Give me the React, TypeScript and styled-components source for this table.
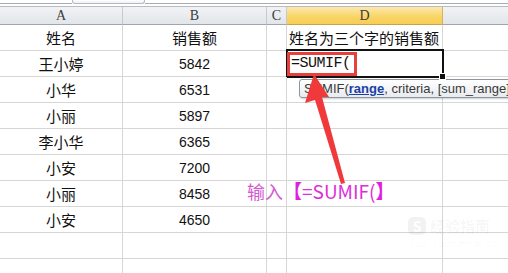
import styled, { createGlobalStyle } from "styled-components";

const GlobalStyle = createGlobalStyle`
  html, body {
    margin: 0;
    padding: 0;
    background: #ffffff;
    overflow: hidden;
  }
`;

const Page = styled.div`
  position: relative;
  width: 508px;
  height: 273px;
  overflow: hidden;
  background: #ffffff;
`;

const TopStrip = styled.div`
  display: flex;
  align-items: flex-start;
  height: 7px;
  border-bottom: 1px solid #b8bcc2;
  box-sizing: border-box;
`;

const StripLine = styled.div<{ $w?: number }>`
  flex: ${(p) => (p.$w ? `0 0 ${p.$w}px` : "1")};
  height: 3px;
  border-bottom: 1px solid #a9adb3;
`;

const StripTab = styled.div`
  flex: 0 0 73px;
  height: 4px;
  border: 1px solid #b5b9bf;
  border-top: none;
  border-radius: 0 0 3px 3px;
  background: linear-gradient(#ffffff, #eef0f3);
  box-sizing: border-box;
`;

const Grid = styled.div`
  display: grid;
  grid-template-columns: 123px 144px 20px 156px 140px;
  grid-template-rows: 18px;
  grid-auto-rows: 26px;
`;

const HeadCell = styled.div<{ $active?: boolean }>`
  box-sizing: border-box;
  display: flex;
  align-items: center;
  justify-content: center;
  font-family: "Liberation Serif", "Noto Sans CJK SC", serif;
  font-size: 14px;
  color: #3c3c3c;
  border-right: 1px solid ${(p) => (p.$active ? "#d9b15a" : "#c6cad0")};
  border-bottom: 1px solid ${(p) => (p.$active ? "#c9a24c" : "#9fa5ad")};
  background: ${(p) =>
    p.$active
      ? "linear-gradient(#fde9ad, #f9d463 60%, #f7cd55)"
      : "linear-gradient(#f1f3f5, #e2e5e9)"};
`;

const Cell = styled.div<{ $align?: "left" | "center"; $num?: boolean }>`
  position: relative;
  box-sizing: border-box;
  display: flex;
  align-items: center;
  justify-content: ${(p) => (p.$align === "left" ? "flex-start" : "center")};
  padding-left: ${(p) => (p.$align === "left" ? "2px" : "0")};
  border-right: 1px solid #d6d6d6;
  border-bottom: 1px solid #d6d6d6;
  font-family: ${(p) =>
    p.$num
      ? `"Liberation Sans", Arial, sans-serif`
      : `"Noto Sans CJK SC", sans-serif`};
  font-size: ${(p) => (p.$num ? "14px" : "15px")};
  color: #111111;
  white-space: nowrap;
`;

const ActiveCell = styled(Cell)`
  &::after {
    content: "";
    position: absolute;
    left: -1px;
    top: -2px;
    right: -2px;
    bottom: -2px;
    border: 2px solid #111111;
    pointer-events: none;
  }
  &::before {
    content: "";
    position: absolute;
    right: -4px;
    bottom: -4px;
    width: 5px;
    height: 5px;
    background: #111111;
    border: 1px solid #ffffff;
    z-index: 2;
  }
`;

const FormulaBox = styled.span`
  display: inline-flex;
  align-items: center;
  height: 24px;
  box-sizing: border-box;
  margin-left: -2px;
  padding: 0 3px 0 1px;
  border: 3px solid #e8403f;
  font-family: "Liberation Mono", "DejaVu Sans Mono", monospace;
  font-size: 15px;
  letter-spacing: -0.5px;
  color: #111111;
  position: relative;
  z-index: 1;
`;

const Tooltip = styled.div`
  position: absolute;
  left: 299px;
  top: 79px;
  height: 19px;
  padding: 0 6px 0 4px;
  box-sizing: border-box;
  display: flex;
  align-items: center;
  border: 1px solid #8f959c;
  border-radius: 3px;
  background: linear-gradient(#ffffff, #e8ebef);
  box-shadow: 1px 1px 2px rgba(0, 0, 0, 0.2);
  font-family: "Liberation Sans", Arial, sans-serif;
  font-size: 13px;
  color: #3a3a3a;
  white-space: nowrap;
`;

const ArgActive = styled.span`
  font-weight: bold;
  color: #1a3fa6;
  text-decoration: underline;
`;

const Arrow = styled.svg`
  position: absolute;
  left: 0;
  top: 0;
  pointer-events: none;
`;

const Note = styled.div`
  position: absolute;
  left: 247px;
  top: 179px;
  display: flex;
  align-items: center;
  font-family: "Noto Sans CJK SC", sans-serif;
  font-size: 19px;
  line-height: 24px;
  color: #dd2fd8;
  white-space: nowrap;
`;

const NoteLead = styled.span`
  color: #d35bd0;
  font-size: 18px;
`;

const Bracket = styled.span`
  font-weight: bold;
  color: #e01fdc;
`;

const Watermark = styled.div`
  position: absolute;
  left: 408px;
  top: 215px;
  display: flex;
  flex-direction: column;
  gap: 3px;
  color: rgba(0, 0, 0, 0.045);
  font-family: "Noto Sans CJK SC", sans-serif;
  white-space: nowrap;
`;

const MarkTop = styled.div`
  display: flex;
  align-items: center;
  gap: 4px;
  font-size: 15px;
  font-weight: bold;
`;

const MarkLogo = styled.span`
  display: inline-flex;
  align-items: center;
  justify-content: center;
  width: 18px;
  height: 18px;
  border-radius: 5px;
  background: rgba(0, 0, 0, 0.05);
  color: #ffffff;
  font-size: 14px;
`;

const MarkSub = styled.div`
  font-family: "Liberation Sans", Arial, sans-serif;
  font-size: 9px;
`;

const rows: [string, string][] = [
  ["王小婷", "5842"],
  ["小华", "6531"],
  ["小丽", "5897"],
  ["李小华", "6365"],
  ["小安", "7200"],
  ["小丽", "8458"],
  ["小安", "4650"],
  ["", ""],
  ["", ""],
];

export default function App() {
  return (
    <Page>
      <GlobalStyle />
      <TopStrip>
        <StripLine $w={72} />
        <StripTab />
        <StripLine />
      </TopStrip>
      <Grid>
        <HeadCell>A</HeadCell>
        <HeadCell>B</HeadCell>
        <HeadCell>C</HeadCell>
        <HeadCell $active>D</HeadCell>
        <HeadCell>E</HeadCell>

        <Cell>姓名</Cell>
        <Cell>销售额</Cell>
        <Cell />
        <Cell $align="left">姓名为三个字的销售额</Cell>
        <Cell />

        {rows.map(([name, amount], i) => (
          <>
            <Cell key={`a${i}`}>{name}</Cell>
            <Cell key={`b${i}`} $num>
              {amount}
            </Cell>
            <Cell key={`c${i}`} />
            {i === 0 ? (
              <ActiveCell key={`d${i}`} $align="left">
                <FormulaBox>=SUMIF(</FormulaBox>
              </ActiveCell>
            ) : (
              <Cell key={`d${i}`} />
            )}
            <Cell key={`e${i}`} />
          </>
        ))}
      </Grid>

      <Tooltip>
        SUMIF(<ArgActive>range</ArgActive>, criteria, [sum_range])
      </Tooltip>

      <Arrow width="508" height="273" viewBox="0 0 508 273">
        <polygon
          points="314,74 329,97 322,97 345,183 341,184 315,100 305,103"
          fill="#f0393b"
        />
      </Arrow>

      <Note>
        <NoteLead>输入</NoteLead>
        <Bracket>【</Bracket>
        <span>=SUMIF(</span>
        <Bracket>】</Bracket>
      </Note>

      <Watermark>
        <MarkTop>
          <MarkLogo>S</MarkLogo>
          <span>经验指南</span>
        </MarkTop>
        <MarkSub>www.jingyanzhinan.com</MarkSub>
      </Watermark>
    </Page>
  );
}
